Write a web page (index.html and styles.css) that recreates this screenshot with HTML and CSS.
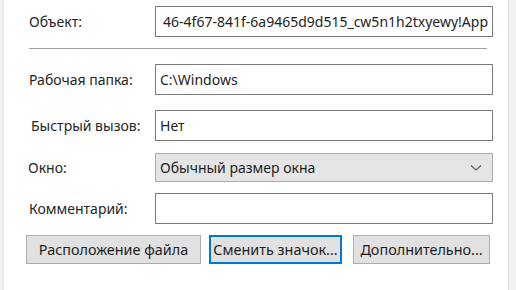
FILE: index.html
```html
<!DOCTYPE html>
<html>
<head>
    <meta charset="utf-8">
    <title>Свойства ярлыка</title>
    <link rel="stylesheet" href="styles.css">
</head>
<body>
<div class="window">
    <div class="panel">
        <div class="row row-target">
            <label class="caption">Объект:</label>
            <div class="field field-scroll"><span>46-4f67-841f-6a9465d9d515_cw5n1h2txyewy!App</span></div>
        </div>

        <hr class="sep">

        <div class="row row-dir">
            <label class="caption">Рабочая папка:</label>
            <div class="field">C:\Windows</div>
        </div>

        <div class="row row-hotkey">
            <label class="caption caption-hotkey">Быстрый вызов:</label>
            <div class="field">Нет</div>
        </div>

        <div class="row row-window">
            <label class="caption caption-window">Окно:</label>
            <div class="combo">
                <span>Обычный размер окна</span>
                <svg class="chevron" width="12" height="8" viewBox="0 0 12 8">
                    <polyline points="1,1.5 6,6 11,1.5" fill="none" stroke="#606060" stroke-width="1.3"/>
                </svg>
            </div>
        </div>

        <div class="row row-comment">
            <label class="caption">Комментарий:</label>
            <div class="field"></div>
        </div>

        <div class="buttons">
            <button class="btn btn-location">Расположение файла</button>
            <button class="btn btn-icon focused">Сменить значок...</button>
            <button class="btn btn-advanced">Дополнительно...</button>
        </div>
    </div>
</div>
</body>
</html>
```

FILE: styles.css
```css
html, body {
    margin: 0;
    padding: 0;
}

body {
    font-family: "Segoe UI", "Noto Sans", "Open Sans", sans-serif;
    font-size: 14px;
    color: #1e1e1e;
    background-color: #f0f0f0;
    width: 516px;
    height: 290px;
    overflow: hidden;
}

.window {
    display: flex;
    height: 290px;
    padding-left: 3px;
    padding-right: 7px;
}

.panel {
    flex: 1;
    background-color: #FFF;
    border-left: 1px solid #e3e3e3;
    border-right: 1px solid #d9d9d9;
    padding: 6px 15px 0 25px;
}

.row {
    display: flex;
    align-items: center;
}

.caption {
    width: 126px;
    flex: none;
    color: #262626;
}

.caption-hotkey {
    margin-left: 2px;
    width: 124px;
}

.caption-window {
    margin-left: -1px;
    width: 127px;
}

.field {
    flex: 1;
    height: 31px;
    box-sizing: border-box;
    border: 1px solid #7a7a7a;
    background-color: #FFF;
    padding: 0 4px;
    display: flex;
    align-items: center;
    white-space: nowrap;
    overflow: hidden;
}

.field-scroll {
    justify-content: flex-end;
}

.sep {
    margin: 11px 6px 15px 0;
    border: none;
    border-top: 1px solid #a0a0a0;
    height: 0;
}

.row-hotkey {
    margin-top: 15px;
}

.row-window {
    margin-top: 12px;
}

.row-comment {
    margin-top: 11px;
}

.combo {
    flex: 1;
    height: 29px;
    box-sizing: border-box;
    border: 1px solid #adadad;
    background-color: #e5e5e5;
    padding: 0 10px 0 4px;
    display: flex;
    align-items: center;
    justify-content: space-between;
}

.buttons {
    display: flex;
    margin-top: 11px;
    margin-left: -3px;
}

.btn {
    font: inherit;
    font-size: 14.4px;
    color: #1e1e1e;
    height: 29px;
    box-sizing: border-box;
    padding: 0;
    background-color: #e1e1e1;
    border: 1px solid #adadad;
    text-align: center;
    cursor: pointer;
}

.btn-location {
    width: 175px;
}

.btn-icon {
    width: 133px;
    margin-left: 8px;
}

.btn-advanced {
    width: 137px;
    margin-left: 11px;
}

.focused {
    border: 2px solid #0078d7;
}
```
